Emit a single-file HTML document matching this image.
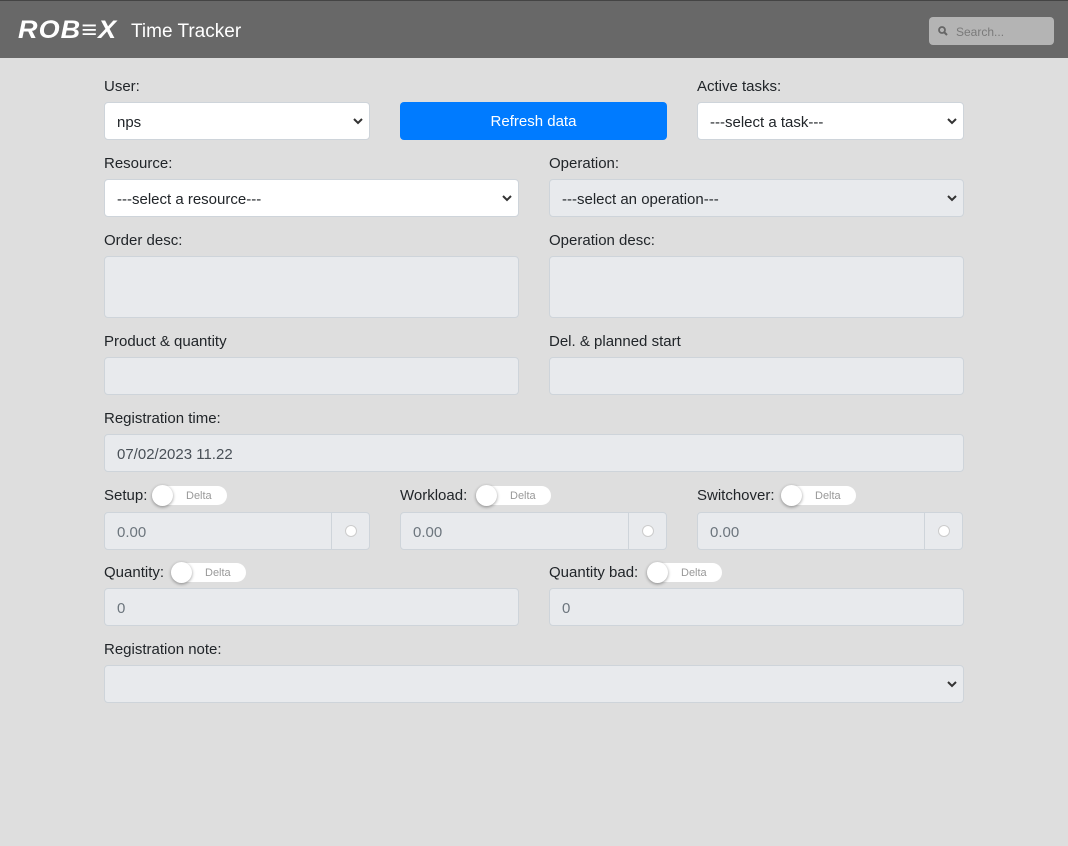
<!DOCTYPE html>
<html><head><meta charset="utf-8"><style>
*{box-sizing:border-box;margin:0;padding:0}
body{width:1068px;height:846px;background:#dedede;font-family:"Liberation Sans",sans-serif;font-size:15px;color:#212529;position:relative;overflow:hidden}
.hdr{position:absolute;left:0;top:0;width:1068px;height:58px;background:#686868;border-top:1px solid #444}
.logo{position:absolute;left:18px;top:15px;color:#fff;font-weight:900;font-style:italic;font-size:25px;letter-spacing:1px;transform:scaleX(1.08);transform-origin:left}
.tt{position:absolute;left:131px;top:20px;color:#fff;font-size:19px}
.search{position:absolute;left:929px;top:16px;width:125px;height:28px;background:#b4b4b4;border-radius:4px;color:#7a7a7a;font-size:12px;padding:8px 0 0 27px}
.lbl{position:absolute;font-size:15px;color:#212529;margin-top:1px}
.f{position:absolute;height:38px;border:1px solid #ced4da;border-radius:4px;background:#e8eaed;padding:11px 12px 0;font-size:15px;color:#495057}
.w{background:#fff;color:#212529}
.chev{position:absolute;right:6px;top:14px}
.btn{position:absolute;left:400px;top:102px;width:267px;height:38px;background:#007bff;border-radius:4px;color:#fff;text-align:center;line-height:40px;font-size:15px}
.tog{position:absolute;width:75px;height:19px;background:#fff;border-radius:10px;font-size:11px;color:#999}
.tog i{position:absolute;left:0;top:-1px;width:21px;height:21px;border-radius:50%;background:#fff;box-shadow:0 1px 3px rgba(0,0,0,.4)}
.tog span{position:absolute;left:34px;top:4px}
.add{position:absolute;right:0;top:0;width:38px;height:36px;border-left:1px solid #ced4da}
.add i{position:absolute;left:13px;top:12px;width:12px;height:12px;border-radius:50%;background:#fff;border:1px solid #ccc}
</style></head><body>
<div class="hdr"><div class="logo">ROB≡X</div><div class="tt">Time Tracker</div>
<div class="search"><svg style="position:absolute;left:9px;top:9px" width="10" height="10" viewBox="0 0 10 10"><circle cx="4" cy="4" r="3" fill="none" stroke="#666" stroke-width="1.8"/><path d="M6 6l3 3" stroke="#666" stroke-width="2"/></svg>Search...</div></div>

<div class="lbl" style="left:104px;top:77px">User:</div>
<div class="f w" style="left:104px;top:102px;width:266px">nps<svg class="chev" width="10" height="8" viewBox="0 0 10 8"><path d="M1 2l4 4 4-4" fill="none" stroke="#333" stroke-width="2"/></svg></div>
<div class="btn">Refresh data</div>
<div class="lbl" style="left:697px;top:77px">Active tasks:</div>
<div class="f w" style="left:697px;top:102px;width:267px">---select a task---<svg class="chev" width="10" height="8" viewBox="0 0 10 8"><path d="M1 2l4 4 4-4" fill="none" stroke="#333" stroke-width="2"/></svg></div>

<div class="lbl" style="left:104px;top:154px">Resource:</div>
<div class="f w" style="left:104px;top:179px;width:415px">---select a resource---<svg class="chev" width="10" height="8" viewBox="0 0 10 8"><path d="M1 2l4 4 4-4" fill="none" stroke="#333" stroke-width="2"/></svg></div>
<div class="lbl" style="left:549px;top:154px">Operation:</div>
<div class="f" style="left:549px;top:179px;width:415px;color:#212529">---select an operation---<svg class="chev" width="10" height="8" viewBox="0 0 10 8"><path d="M1 2l4 4 4-4" fill="none" stroke="#333" stroke-width="2"/></svg></div>

<div class="lbl" style="left:104px;top:231px">Order desc:</div>
<div class="f" style="left:104px;top:256px;width:415px;height:62px"></div>
<div class="lbl" style="left:549px;top:231px">Operation desc:</div>
<div class="f" style="left:549px;top:256px;width:415px;height:62px"></div>

<div class="lbl" style="left:104px;top:332px">Product &amp; quantity</div>
<div class="f" style="left:104px;top:357px;width:415px"></div>
<div class="lbl" style="left:549px;top:332px">Del. &amp; planned start</div>
<div class="f" style="left:549px;top:357px;width:415px"></div>

<div class="lbl" style="left:104px;top:409px">Registration time:</div>
<div class="f" style="left:104px;top:434px;width:860px">07/02/2023 11.22</div>

<div class="lbl" style="left:104px;top:486px">Setup:</div>
<div class="tog" style="left:152px;top:486px"><i></i><span>Delta</span></div>
<div class="f" style="left:104px;top:512px;width:266px;color:#6c757d">0.00<div class="add"><i></i></div></div>
<div class="lbl" style="left:400px;top:486px">Workload:</div>
<div class="tog" style="left:476px;top:486px"><i></i><span>Delta</span></div>
<div class="f" style="left:400px;top:512px;width:267px;color:#6c757d">0.00<div class="add"><i></i></div></div>
<div class="lbl" style="left:697px;top:486px">Switchover:</div>
<div class="tog" style="left:781px;top:486px"><i></i><span>Delta</span></div>
<div class="f" style="left:697px;top:512px;width:266px;color:#6c757d">0.00<div class="add"><i></i></div></div>

<div class="lbl" style="left:104px;top:563px">Quantity:</div>
<div class="tog" style="left:171px;top:563px"><i></i><span>Delta</span></div>
<div class="f" style="left:104px;top:588px;width:415px;color:#6c757d">0</div>
<div class="lbl" style="left:549px;top:563px">Quantity bad:</div>
<div class="tog" style="left:647px;top:563px"><i></i><span>Delta</span></div>
<div class="f" style="left:549px;top:588px;width:415px;color:#6c757d">0</div>

<div class="lbl" style="left:104px;top:640px">Registration note:</div>
<div class="f" style="left:104px;top:665px;width:860px"><svg class="chev" width="10" height="8" viewBox="0 0 10 8"><path d="M1 2l4 4 4-4" fill="none" stroke="#333" stroke-width="2"/></svg></div>
</body></html>
